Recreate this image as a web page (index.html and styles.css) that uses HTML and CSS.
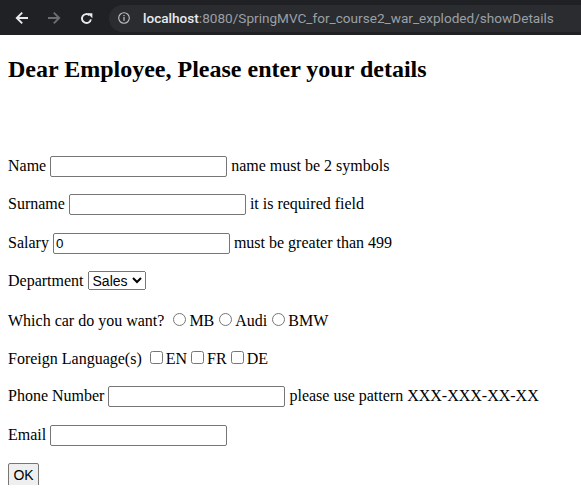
FILE: index.html
```html
<!DOCTYPE html>
<html lang="en">
<head>
<meta charset="utf-8">
<title>showDetails</title>
<link rel="stylesheet" href="styles.css">
</head>
<body>
<header class="toolbar">
  <svg class="nav-icon back" width="14" height="14" viewBox="0 0 14 14"><path d="M13 7H2M7.2 1.6L1.8 7l5.4 5.4" fill="none" stroke="#e8eaed" stroke-width="1.9"/></svg>
  <svg class="nav-icon fwd" width="14" height="14" viewBox="0 0 14 14"><path d="M1 7h11M6.8 1.6L12.2 7l-5.4 5.4" fill="none" stroke="#6b6d70" stroke-width="1.9"/></svg>
  <svg class="nav-icon reload" width="13" height="13" viewBox="0 0 13 13"><path d="M10.9 7.4A4.5 4.5 0 1 1 9.6 3.3" fill="none" stroke="#e8eaed" stroke-width="1.9"/><path d="M7.4 1.2h5v5z" fill="#e8eaed"/></svg>
  <div class="omnibox">
    <svg class="info" width="12" height="12" viewBox="0 0 12 12"><circle cx="6" cy="6" r="5.3" fill="none" stroke="#bdc1c6" stroke-width="1.1"/><rect x="5.4" y="5" width="1.2" height="3.8" fill="#bdc1c6"/><rect x="5.4" y="3" width="1.2" height="1.2" fill="#bdc1c6"/></svg>
    <span class="url"><span class="host">localhost</span>:8080/SpringMVC_for_course2_war_exploded/showDetails</span>
  </div>
</header>
<main class="page">
  <h2 class="title">Dear Employee, Please enter your details</h2>
  <form class="form">
    <div class="row">Name <input class="field" type="text"> name must be 2 symbols</div>
    <div class="row">Surname <input class="field" type="text"> it is required field</div>
    <div class="row">Salary <input class="field" type="text" value="0"> must be greater than 499</div>
    <div class="row">Department <select class="select"><option>Sales</option><option>IT</option><option>HR</option></select></div>
    <div class="row">Which car do you want? <input class="radio" type="radio" name="car">MB<input class="radio" type="radio" name="car">Audi<input class="radio" type="radio" name="car">BMW</div>
    <div class="row">Foreign Language(s) <input class="check" type="checkbox">EN<input class="check" type="checkbox">FR<input class="check" type="checkbox">DE</div>
    <div class="row">Phone Number <input class="field" type="text"> please use pattern XXX-XXX-XX-XX</div>
    <div class="row">Email <input class="field" type="text"></div>
    <div class="row"><button class="btn" type="button">OK</button></div>
  </form>
</main>
</body>
</html>
```
FILE: styles.css
```css
html, body {
  margin: 0;
  padding: 0;
  background: #ffffff;
}
body {
  font-family: "Liberation Serif", "Times New Roman", serif;
  font-size: 16px;
  color: #000;
}
.toolbar {
  height: 35px;
  background: #202124;
  display: flex;
  align-items: center;
  padding-left: 15px;
  box-sizing: border-box;
  overflow: hidden;
}
.nav-icon { flex: none; display: block; }
.back { margin-top: 1px; }
.fwd { margin-left: 18px; margin-top: 1px; }
.reload { margin-left: 19px; margin-top: 1px; }
.omnibox {
  flex: none;
  margin-left: 16px;
  width: 520px;
  height: 27px;
  margin-top: 1px;
  border-radius: 14px;
  background: #2b2c2f;
  display: flex;
  align-items: center;
  padding-left: 9px;
  box-sizing: border-box;
}
.info { flex: none; display: block; }
.url {
  margin-left: 13px;
  font-family: Roboto, "Liberation Sans", sans-serif;
  font-size: 13.6px;
  color: #9aa0a6;
  white-space: nowrap;
}
.host { color: #e8eaed; font-weight: 500; }
.page {
  padding: 20px 8px 0;
}
.title {
  margin: 0;
  font-size: 24px;
  line-height: 28px;
  font-weight: bold;
}
.form {
  margin-top: 73px;
  display: flex;
  flex-direction: column;
  gap: 16.4px;
}
.row {
  height: 22px;
  white-space: nowrap;
}
.field {
  width: 177px;
  height: 21px;
  box-sizing: border-box;
  border: 1px solid #767676;
  border-radius: 2px;
  padding: 1px 2px;
  font-family: "Liberation Sans", Arial, sans-serif;
  font-size: 13.333px;
  margin: 0;
}
.select {
  font-family: "Liberation Sans", Arial, sans-serif;
  font-size: 14px;
  width: 58px;
  height: 19px;
  margin: 0;
}
.radio { margin: 3px 3px 0 5px; }
.check { margin: 3px 3px 3px 4px; }
.btn {
  font-family: "Liberation Sans", Arial, sans-serif;
  font-size: 14px;
  width: 31px;
  height: 24px;
  padding: 0;
  margin: 0;
  border: 1px solid #767676;
  border-radius: 2px;
  background: #efefef;
  color: #000;
}
```
